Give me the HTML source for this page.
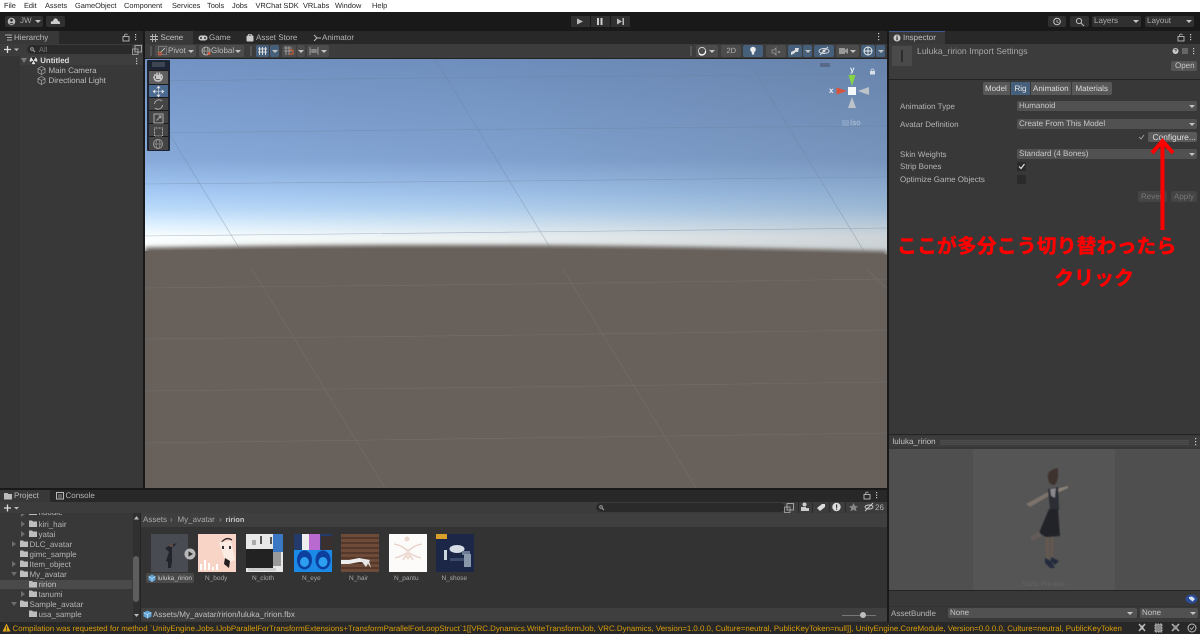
<!DOCTYPE html>
<html><head><meta charset="utf-8">
<style>
html,body{margin:0;padding:0;background:#383838;}
#p{position:relative;width:1200px;height:634px;overflow:hidden;background:#383838;font-family:"Liberation Sans",sans-serif;font-size:8px;color:#c4c4c4;text-rendering:geometricPrecision;filter:blur(.25px);}
#p div,#p span{position:absolute;white-space:nowrap;}
.t{line-height:10px;height:10px;}
.m{color:#222;top:0;line-height:11px;font-size:7.400px;}
.btn{background:#585858;border-radius:2px;}
.blu{background:#46607c;border-radius:2px;}
.dd{background:#515151;border-radius:2px;height:10px;line-height:10px;color:#c8c8c8;padding-left:2px;box-sizing:border-box;}
.tri{width:0;height:0;border-left:3px solid transparent;border-right:3px solid transparent;border-top:3px solid #c4c4c4;}
svg{position:absolute;overflow:visible;}
.tb{background:#454545;border-top:1px solid #1b1b1b;width:19px;height:13px;left:149px;}
.lb{color:#a8a8a8;font-size:6.500px;top:573.500px;}
</style></head><body><div id="p">

<!-- menu -->
<div style="left:0;top:0;width:1200px;height:11.500px;background:#fff"></div>
<span class="m" style="left:4px">File</span>
<span class="m" style="left:24px">Edit</span>
<span class="m" style="left:45px">Assets</span>
<span class="m" style="left:75px">GameObject</span>
<span class="m" style="left:124px">Component</span>
<span class="m" style="left:172px">Services</span>
<span class="m" style="left:207px">Tools</span>
<span class="m" style="left:232px">Jobs</span>
<span class="m" style="left:255.500px">VRChat SDK</span>
<span class="m" style="left:303px">VRLabs</span>
<span class="m" style="left:335px">Window</span>
<span class="m" style="left:372px">Help</span>

<!-- toolbar -->
<div style="left:0;top:11.500px;width:1200px;height:19.500px;background:#191919"></div>
<div class="btn" style="left:5px;top:16px;width:38px;height:11px;background:#303030"></div>
<svg style="left:7px;top:17px" width="10" height="9"><circle cx="4.500" cy="4.500" r="3.800" fill="#bbb"/><circle cx="4.500" cy="3.300" r="1.400" fill="#383838"/><path d="M2 7.200Q4.500 4.800 7 7.200" fill="#383838"/></svg>
<span class="t" style="left:20px;top:16px;color:#aaa">JW</span>
<div class="tri" style="left:35px;top:20px"></div>
<div class="btn" style="left:46px;top:16px;width:19px;height:11px;background:#303030"></div>
<svg style="left:50px;top:17px" width="11" height="8"><path d="M1 7Q0 4 3 4Q4 1 6 1.500Q8 2 8 4Q10.500 4 10 7Z" fill="#ccc"/></svg>

<div style="left:570.500px;top:15.500px;width:19px;height:11px;background:#303030"></div>
<div style="left:590.500px;top:15.500px;width:19px;height:11px;background:#303030"></div>
<div style="left:610.500px;top:15.500px;width:19px;height:11px;background:#303030"></div>
<svg style="left:570px;top:15px" width="60" height="12"><path d="M7 3.500L13 6.500L7 9.500Z" fill="#bbb"/><rect x="27" y="3" width="2" height="7" fill="#ccc"/><rect x="30.500" y="3" width="2" height="7" fill="#ccc"/><path d="M47 3.500L52 6.500L47 9.500Z" fill="#bbb"/><rect x="52.500" y="3" width="1.500" height="7" fill="#bbb"/></svg>

<div style="left:1048px;top:16px;width:18px;height:11px;background:#303030;border-radius:2px"></div>
<svg style="left:1052px;top:17px" width="10" height="9"><circle cx="5" cy="4.500" r="3.300" fill="none" stroke="#ccc" stroke-width="1"/><path d="M5 3V5L6.500 5.500" stroke="#ccc" stroke-width=".8" fill="none"/></svg>
<div style="left:1070px;top:16px;width:19px;height:11px;background:#303030;border-radius:2px"></div>
<svg style="left:1075px;top:17px" width="10" height="10"><circle cx="4" cy="4" r="2.600" fill="none" stroke="#bbb"/><path d="M6 6L9 9" stroke="#bbb"/></svg>
<div style="left:1092px;top:16px;width:49px;height:11px;background:#303030;border-radius:2px"></div>
<span class="t" style="left:1094px;top:16px;color:#aaa">Layers</span>
<div class="tri" style="left:1133px;top:20px"></div>
<div style="left:1145px;top:16px;width:49px;height:11px;background:#303030;border-radius:2px"></div>
<span class="t" style="left:1147px;top:16px;color:#aaa">Layout</span>
<div class="tri" style="left:1186px;top:20px"></div>

<!-- dividers -->
<div style="left:0;top:31px;width:1200px;height:603px;background:#191919"></div>

<!-- hierarchy -->
<div style="left:0;top:31px;width:143px;height:457px;background:#383838"></div>
<div style="left:0;top:31px;width:143px;height:13px;background:#282828"></div>
<div style="left:0;top:31px;width:59px;height:13px;background:#383838"></div>
<svg style="left:5px;top:34px" width="8" height="8"><path d="M0 1H7M2 3.500H7M2 6H7" stroke="#aaa" stroke-width=".9"/></svg>
<span class="t" style="left:14px;top:32.500px;color:#bbb">Hierarchy</span>
<svg style="left:122px;top:33px" width="16" height="9"><rect x="1" y="3.500" width="6" height="4.500" fill="none" stroke="#bbb" stroke-width=".9"/><path d="M2.500 3.500V2Q4 0 5.500 2" fill="none" stroke="#bbb" stroke-width=".8"/><rect x="13" y="1" width="1.200" height="1.200" fill="#ccc"/><rect x="13" y="3.500" width="1.200" height="1.200" fill="#ccc"/><rect x="13" y="6" width="1.200" height="1.200" fill="#ccc"/></svg>
<div style="left:0;top:44px;width:143px;height:12px;background:#3c3c3c"></div>
<svg style="left:4px;top:45px" width="16" height="9"><path d="M0 4.500H7M3.500 1V8" stroke="#ddd" stroke-width="1.300"/><path d="M10 3.500H15L12.500 6Z" fill="#bbb"/></svg>
<div style="left:27px;top:45px;width:105px;height:9px;background:#2a2a2a;border-radius:5px 0 0 5px"></div>
<span class="t" style="left:39px;top:44.500px;color:#7a7a7a;font-size:7.500px">All</span>
<svg style="left:30px;top:47px" width="6" height="6"><circle cx="2" cy="2" r="1.300" fill="none" stroke="#aaa" stroke-width=".8"/><path d="M3 3L5 5" stroke="#aaa"/></svg>
<svg style="left:132px;top:44.500px" width="10" height="10"><rect x=".5" y="4" width="5.500" height="5.500" fill="none" stroke="#aaa" stroke-width=".8"/><rect x="3" y=".5" width="6.500" height="6.500" fill="none" stroke="#bbb" stroke-width=".8"/></svg>
<div style="left:0;top:56px;width:20px;height:432px;background:#353535"></div>
<div style="left:20px;top:56px;width:123px;height:9px;background:#3e3e3e"></div>
<svg style="left:21px;top:58px" width="6" height="5"><path d="M0 0H6L3 5Z" fill="#7a7a7a"/></svg>
<svg style="left:29px;top:56px" width="9" height="9"><circle cx="4.500" cy="4.500" r="3.800" fill="#ddd"/><path d="M4.500 4.500L2.500 1.500A3.800 3.800 0 0 1 6.500 1.500ZM4.500 4.500L1 6L2.500 8ZM4.500 4.500L8 6L6.500 8Z" fill="#222"/></svg>
<span class="t" style="left:40.300px;top:55.500px;color:#dcdcdc;font-weight:bold;font-size:7.800px">Untitled</span>
<svg style="left:136px;top:58px" width="2" height="7"><rect width="1.200" height="1.200" fill="#ccc"/><rect y="2.500" width="1.200" height="1.200" fill="#ccc"/><rect y="5" width="1.200" height="1.200" fill="#ccc"/></svg>
<svg style="left:37px;top:66px" width="9" height="9"><path d="M4.500 .5L8 2.500V6.500L4.500 8.500L1 6.500V2.500ZM1 2.500L4.500 4.500L8 2.500M4.500 4.500V8.500" fill="none" stroke="#aaa" stroke-width=".7"/></svg>
<svg style="left:37px;top:76px" width="9" height="9"><path d="M4.500 .5L8 2.500V6.500L4.500 8.500L1 6.500V2.500ZM1 2.500L4.500 4.500L8 2.500M4.500 4.500V8.500" fill="none" stroke="#aaa" stroke-width=".7"/></svg>
<span class="t" style="left:48.500px;top:65.500px;color:#bdbdbd">Main Camera</span>
<span class="t" style="left:48.500px;top:75.500px;color:#bdbdbd">Directional Light</span>

<!-- scene tabs -->
<div style="left:145px;top:31px;width:742px;height:13px;background:#282828"></div>
<div style="left:145px;top:31px;width:48px;height:13px;background:#383838"></div>
<svg style="left:150px;top:34px" width="8" height="8"><path d="M2.500 0V8M5.500 0V8M0 2.500H8M0 5.500H8" stroke="#bbb" stroke-width=".9"/></svg>
<span class="t" style="left:160.500px;top:32.500px;color:#c4c4c4">Scene</span>
<svg style="left:198px;top:35px" width="10" height="6"><rect x=".5" y=".5" width="9" height="5" rx="2.500" fill="#ccc"/><circle cx="3" cy="3" r="1" fill="#333"/><circle cx="7" cy="3" r="1" fill="#333"/></svg>
<span class="t" style="left:209px;top:32.500px;color:#b4b4b4">Game</span>
<svg style="left:246px;top:33px" width="8" height="9"><rect x=".5" y="2.500" width="7" height="6" rx="1" fill="#ccc"/><path d="M2.500 2.500V1.500H5.500V2.500" stroke="#ccc" fill="none" stroke-width=".8"/></svg>
<span class="t" style="left:256px;top:32.500px;color:#b4b4b4">Asset Store</span>
<svg style="left:313px;top:34px" width="9" height="8"><path d="M1 1L4 4L1 7M4 4H8" fill="none" stroke="#bbb" stroke-width="1"/></svg>
<span class="t" style="left:322px;top:32.500px;color:#b4b4b4">Animator</span>
<svg style="left:878px;top:33px" width="2" height="8"><rect width="1.200" height="1.200" fill="#ccc"/><rect y="3" width="1.200" height="1.200" fill="#ccc"/><rect y="6" width="1.200" height="1.200" fill="#ccc"/></svg>

<!-- scene toolbar -->
<div style="left:145px;top:44px;width:742px;height:15px;background:#3c3c3c"></div>
<div style="left:145px;top:58px;width:742px;height:1px;background:#222"></div>
<div style="left:150px;top:46px;width:1.500px;height:10px;background:#555"></div>
<div class="btn" style="left:155px;top:45px;width:41px;height:12px;background:#4c4c4c"></div>
<svg style="left:158px;top:46px" width="10" height="10"><rect x=".5" y=".5" width="8" height="8" fill="none" stroke="#888" stroke-width=".7"/><path d="M2 7L7 2" stroke="#ddd" stroke-width=".7"/><circle cx="2" cy="7.500" r="1.500" fill="none" stroke="#d65c36"/></svg>
<span class="t" style="left:168px;top:46px;color:#bbb">Pivot</span>
<div class="tri" style="left:188px;top:50px"></div>
<div class="btn" style="left:199px;top:45px;width:45px;height:12px;background:#4c4c4c"></div>
<svg style="left:201px;top:46px" width="10" height="10"><circle cx="5" cy="5" r="4" fill="none" stroke="#bbb" stroke-width=".8"/><ellipse cx="5" cy="5" rx="2" ry="4" fill="none" stroke="#bbb" stroke-width=".6"/><path d="M1 5H9" stroke="#bbb" stroke-width=".6"/><circle cx="8" cy="7.500" r="1.500" fill="#d65c36"/></svg>
<span class="t" style="left:211px;top:46px;color:#bbb">Global</span>
<div class="tri" style="left:235px;top:50px"></div>
<div style="left:250px;top:46px;width:1.500px;height:10px;background:#555"></div>
<div class="blu" style="left:256px;top:45px;width:13px;height:12px"></div>
<div class="blu" style="left:270px;top:45px;width:9px;height:12px"></div>
<svg style="left:258px;top:47px" width="9" height="8"><path d="M1.500 0V8M4.500 0V8M7.500 0V8M0 2H9M0 5H9" stroke="#ddd" stroke-width="1"/></svg>
<div class="tri" style="left:272px;top:50px"></div>
<div class="btn" style="left:282px;top:45px;width:14px;height:12px;background:#4c4c4c"></div>
<div class="btn" style="left:297px;top:45px;width:8px;height:12px;background:#4c4c4c"></div>
<svg style="left:284px;top:46px" width="10" height="10"><path d="M2 0V9M5 0V9M0 2H8M0 5H8" stroke="#aaa" stroke-width=".8"/><path d="M5 4H9V8H5" fill="none" stroke="#d65c36" stroke-width="1"/></svg>
<div class="tri" style="left:298px;top:50px"></div>
<div class="btn" style="left:307px;top:45px;width:22px;height:12px;background:#4c4c4c"></div>
<svg style="left:309px;top:47px" width="10" height="8"><path d="M1 0V8M9 0V8M1 3H9M1 5H9M4 2V6M6 2V6" stroke="#999" stroke-width=".9"/></svg>
<div class="tri" style="left:321px;top:50px"></div>

<div style="left:690px;top:46px;width:1.500px;height:10px;background:#555"></div>
<div class="btn" style="left:696px;top:45px;width:22px;height:12px;background:#4c4c4c"></div>
<svg style="left:697px;top:46px" width="10" height="10"><circle cx="5" cy="5" r="3.600" fill="none" stroke="#ccc"/><path d="M2 7.500A3.600 3.600 0 0 0 8.500 5" stroke="#fff" fill="none" stroke-width="1.200"/></svg>
<div class="tri" style="left:709px;top:50px"></div>
<div class="btn" style="left:721px;top:45px;width:20px;height:12px;background:#4c4c4c"></div>
<span class="t" style="left:726.500px;top:46px;color:#b4b4b4;font-size:7.500px">2D</span>
<div class="blu" style="left:743px;top:45px;width:20px;height:12px"></div>
<svg style="left:749px;top:46px" width="8" height="10"><circle cx="4" cy="3.500" r="2.800" fill="#eee"/><rect x="2.800" y="6" width="2.400" height="2.500" fill="#eee"/></svg>
<div class="btn" style="left:766px;top:45px;width:20px;height:12px;background:#4c4c4c"></div>
<svg style="left:772px;top:47px" width="9" height="8"><path d="M0 3V6H2L4 8V1L2 3ZM6 4L8 6M8 4L6 6" fill="none" stroke="#999" stroke-width=".8"/></svg>
<div class="blu" style="left:788px;top:45px;width:14px;height:12px"></div>
<div class="blu" style="left:803px;top:45px;width:9px;height:12px"></div>
<svg style="left:790px;top:47px" width="10" height="8"><path d="M1 5L5 3L5 6L1 8ZM5 1H9L8 5H5Z" fill="#ddd"/></svg>
<div class="tri" style="left:805px;top:50px"></div>
<div class="blu" style="left:814px;top:45px;width:20px;height:12px"></div>
<svg style="left:818px;top:46px" width="12" height="10"><ellipse cx="6" cy="5" rx="5" ry="2.500" fill="none" stroke="#ddd" stroke-width=".9"/><circle cx="6" cy="5" r="1.500" fill="#ddd"/><path d="M2 9L10 1" stroke="#ddd" stroke-width="1"/></svg>
<div class="btn" style="left:836px;top:45px;width:23px;height:12px;background:#4c4c4c"></div>
<svg style="left:839px;top:47px" width="9" height="8"><rect y="1" width="6" height="6" fill="#999"/><path d="M6 3L9 1V7L6 5Z" fill="#999"/></svg>
<div class="tri" style="left:850px;top:50px"></div>
<div class="blu" style="left:861px;top:45px;width:14px;height:12px"></div>
<div class="blu" style="left:876px;top:45px;width:9px;height:12px"></div>
<svg style="left:863px;top:46px" width="10" height="10"><circle cx="5" cy="5" r="4" fill="none" stroke="#eee" stroke-width="1"/><path d="M1 5H9M5 1V9" stroke="#eee" stroke-width=".9"/></svg>
<div class="tri" style="left:878px;top:50px"></div>

<!-- scene view -->
<svg style="left:145px;top:59px;overflow:hidden" width="742" height="429">
<defs>
<linearGradient id="s" x1="0" y1="0" x2="0" y2="1">
<stop offset="0" stop-color="#7293c4"/>
<stop offset=".5" stop-color="#86a9da"/>
<stop offset=".67" stop-color="#a6cbf5"/>
<stop offset=".755" stop-color="#bcdcfb"/>
<stop offset=".83" stop-color="#dff1ff"/>
<stop offset=".89" stop-color="#fbffff"/>
<stop offset="1" stop-color="#f4f8f6"/>
</linearGradient>
<linearGradient id="o" x1="0" y1="0" x2="1" y2="0">
<stop offset="0" stop-color="#4a5866" stop-opacity="0"/>
<stop offset=".45" stop-color="#4a5866" stop-opacity=".09"/>
<stop offset="1" stop-color="#4a5866" stop-opacity=".26"/>
</linearGradient>
<filter id="b" x="-5%" y="-5%" width="110%" height="110%"><feGaussianBlur stdDeviation="2"/></filter>
</defs>
<rect width="742" height="200" fill="url(#s)"/>
<rect width="742" height="200" fill="url(#o)"/>
<g stroke="#6c7f98" stroke-width=".6" opacity=".5" fill="none">
<path d="M0 22L375 18L742 15M0 74L375 70L742 67M0 125L375 122L742 118M0 177L380 173L742 169"/>
<path d="M0 35L110 215M290 0L420 213M602 0L742 230"/>
</g>
<path d="M0 188.500Q371 182 742 192V429H0Z" fill="#67605b" filter="url(#b)"/>
<path d="M0 192Q371 185.500 742 195.500V429H0Z" fill="#67605b"/>
<g stroke="#73706c" stroke-width=".6" fill="none">
<path d="M0 229L380 225L742 220M0 280L380 276L742 271M0 332L380 328L742 323M0 384L380 379L742 374"/>
<path d="M107 210L240 429M418 210L551 429M722 210L742 230"/>
</g>
</svg>
<!-- tool palette -->
<div style="left:147px;top:60px;width:23px;height:91px;background:#1d2433;border-radius:1px"></div>
<div style="left:152px;top:62px;width:13px;height:5px;background:#3d4452"></div>
<div class="tb" style="top:70px;background:#5e5e5e"></div>
<div class="tb" style="top:84px;background:#4b6a91"></div>
<div class="tb" style="top:97px"></div>
<div class="tb" style="top:110px"></div>
<div class="tb" style="top:123px"></div>
<div class="tb" style="top:136px"></div>
<svg style="left:149px;top:70px" width="19" height="80" fill="none" stroke="#c8c8c8" stroke-width="1">
<path d="M6 6V4M8 5V2.500M10.500 5V2.500M12.500 6V4M5 6Q5 11 9 11Q13 11 13.500 6" stroke-width="1.500"/><path d="M7 5H12V9H7Z" fill="#c8c8c8" stroke="none"/>
<path d="M9.500 17V26M5 21.500H14M9.500 16L8 18H11ZM9.500 27L8 25H11ZM4 21.500L6 20V23ZM15 21.500L13 20V23Z" fill="#ddd" stroke="#ddd" stroke-width=".6"/>
<path d="M5.500 34A4.500 4.500 0 0 1 13 31M13.500 35A4.500 4.500 0 0 1 6 38" stroke="#aaa"/>
<rect x="5" y="44" width="9" height="9" stroke="#aaa"/><path d="M7.500 50.500L12 46M9.500 46H12V48.500" stroke="#aaa"/>
<rect x="5.500" y="58" width="8" height="8" stroke="#aaa" stroke-dasharray="1 .5"/>
<circle cx="9" cy="74" r="4.500" stroke="#999"/><ellipse cx="9" cy="74" rx="2" ry="4.500" stroke="#999" stroke-width=".7"/><path d="M4.500 74H13.500" stroke="#999" stroke-width=".7"/>
</svg>

<!-- gizmo -->
<div style="left:820px;top:63px;width:10px;height:4px;background:#58698a"></div>
<svg style="left:869px;top:68px" width="7" height="7"><rect x="1" y="3" width="5" height="3.500" fill="#d8e0ec"/><path d="M2 3V2Q3.500 0 5 2V3" stroke="#d8e0ec" fill="none" stroke-width=".7"/></svg>
<span class="t" style="left:850px;top:65px;color:#e9eff5;font-weight:bold;font-size:8px">y</span>
<span class="t" style="left:829px;top:86px;color:#e9eff5;font-weight:bold;font-size:8px">x</span>
<svg style="left:830px;top:70px" width="42" height="42">
<path d="M18.500 5H25.500L22 16Z" fill="#85d445"/>
<path d="M6.500 17.500V24.500L17 21Z" fill="#d9543b"/>
<path d="M39 17V25L28 21Z" fill="#bcc3c9"/>
<path d="M18 38H26L22 27Z" fill="#bcc3c9"/>
<rect x="18" y="17" width="8" height="8" fill="#f4f8fb"/>
</svg>
<svg style="left:842px;top:120px" width="8" height="7"><path d="M0 1H7M0 3H7M0 5H7" stroke="#a8bcd6" stroke-width=".8"/></svg>
<span class="t" style="left:850px;top:118px;color:#b7c6da;font-size:8px">Iso</span>

<!-- inspector -->
<div style="left:889px;top:31px;width:311px;height:591px;background:#383838"></div>
<div style="left:889px;top:31px;width:311px;height:13px;background:#282828"></div>
<div style="left:889px;top:31px;width:56px;height:13px;background:#383838;border-top:1px solid #3c5a8c;box-sizing:border-box"></div>
<svg style="left:893px;top:34px" width="8" height="8"><circle cx="4" cy="4" r="3.500" fill="#ccc"/><rect x="3.400" y="3.200" width="1.300" height="3" fill="#333"/><rect x="3.400" y="1.600" width="1.300" height="1.100" fill="#333"/></svg>
<span class="t" style="left:903px;top:32.500px;color:#c0c0c0">Inspector</span>
<svg style="left:1177px;top:33px" width="16" height="9"><rect x="1" y="3.500" width="6" height="4.500" fill="none" stroke="#bbb" stroke-width=".9"/><path d="M2.500 3.500V2Q4 0 5.500 2" fill="none" stroke="#bbb" stroke-width=".8"/><rect x="13" y="1" width="1.200" height="1.200" fill="#ccc"/><rect x="13" y="3.500" width="1.200" height="1.200" fill="#ccc"/><rect x="13" y="6" width="1.200" height="1.200" fill="#ccc"/></svg>
<div style="left:889px;top:44px;width:311px;height:35px;background:#3c3c3c"></div>
<div style="left:889px;top:79px;width:311px;height:1px;background:#242424"></div>
<div style="left:892px;top:46px;width:20px;height:20px;background:#4a4a4a"></div>
<div style="left:901px;top:50px;width:2px;height:12px;background:#2b2b2b"></div>
<span class="t" style="left:917px;top:46px;color:#a8a8a8;font-size:8.700px">Luluka_ririon Import Settings</span>
<svg style="left:1172px;top:47px" width="24" height="8"><circle cx="3.500" cy="4" r="3" fill="#ccc"/><path d="M2.500 3Q3.500 1.500 4.500 3L3.500 4.500" stroke="#333" fill="none" stroke-width=".7"/><path d="M10 2H16M10 4H16M10 6H16" stroke="#aaa" stroke-width=".8"/><rect x="21" y="1" width="1.200" height="1.200" fill="#ccc"/><rect x="21" y="3.500" width="1.200" height="1.200" fill="#ccc"/><rect x="21" y="6" width="1.200" height="1.200" fill="#ccc"/></svg>
<div class="btn" style="left:1171px;top:60.500px;width:26px;height:10.500px;background:#565656"></div>
<span class="t" style="left:1175px;top:60.500px;color:#c8c8c8">Open</span>

<div style="left:983px;top:82px;width:27px;height:13px;background:#585858;border-radius:2px 0 0 2px"></div>
<div style="left:1011px;top:82px;width:19px;height:13px;background:#46607c"></div>
<div style="left:1031px;top:82px;width:40px;height:13px;background:#585858"></div>
<div style="left:1072px;top:82px;width:40px;height:13px;background:#585858;border-radius:0 2px 2px 0"></div>
<span class="t" style="left:985px;top:83.500px;color:#ddd">Model</span>
<span class="t" style="left:1014.500px;top:83.500px;color:#e6e6e6">Rig</span>
<span class="t" style="left:1033px;top:83.500px;color:#ddd">Animation</span>
<span class="t" style="left:1075.500px;top:83.500px;color:#ddd">Materials</span>

<span class="t" style="left:900px;top:102px;color:#b4b4b4">Animation Type</span>
<span class="t" style="left:900px;top:119.500px;color:#b4b4b4">Avatar Definition</span>
<span class="t" style="left:900px;top:149.500px;color:#b4b4b4">Skin Weights</span>
<span class="t" style="left:900px;top:162px;color:#b4b4b4">Strip Bones</span>
<span class="t" style="left:900px;top:174.500px;color:#b4b4b4">Optimize Game Objects</span>
<div class="dd" style="left:1017px;top:101px;width:180px">Humanoid</div>
<div class="tri" style="left:1189px;top:105px"></div>
<div class="dd" style="left:1017px;top:119px;width:180px">Create From This Model</div>
<div class="tri" style="left:1189px;top:123px"></div>
<svg style="left:1138px;top:134px" width="7" height="6"><path d="M1 3L3 5L6 1" stroke="#aaa" fill="none" stroke-width=".8"/></svg>
<div class="btn" style="left:1148px;top:132px;width:49px;height:10px;background:#5a5a5a"></div>
<span class="t" style="left:1152.500px;top:132px;color:#ddd;font-size:8.400px">Configure...</span>
<div class="dd" style="left:1017px;top:149px;width:180px">Standard (4 Bones)</div>
<div class="tri" style="left:1189px;top:153px"></div>
<div style="left:1017px;top:162px;width:9px;height:9px;background:#2a2a2a;border-radius:1px"></div>
<svg style="left:1017px;top:162px" width="9" height="9"><path d="M2 4.500L4 6.500L7.500 2" stroke="#e4e4e4" stroke-width="1.200" fill="none"/></svg>
<div style="left:1017px;top:175px;width:9px;height:9px;background:#2a2a2a;border-radius:1px"></div>
<div class="btn" style="left:1138px;top:191px;width:29px;height:11px;background:#444"></div>
<div class="btn" style="left:1171px;top:191px;width:26px;height:11px;background:#444"></div>
<span class="t" style="left:1141px;top:192px;color:#777">Revert</span>
<span class="t" style="left:1174px;top:192px;color:#777">Apply</span>

<!-- annotation -->
<svg style="left:1140px;top:130px" width="40" height="105">
<path d="M22.500 11V100" stroke="#f00" stroke-width="4"/>
<path d="M12 23L22.500 11L33 23" stroke="#f00" stroke-width="4" fill="none"/>
</svg>
<span style="left:897px;top:234px;font-family:'Liberation Sans','Noto Sans CJK JP',sans-serif;font-weight:900;font-size:20px;line-height:26px;color:#f00;letter-spacing:-.050px">ここが多分こう切り替わったら</span>
<span style="left:1054px;top:266px;font-family:'Liberation Sans','Noto Sans CJK JP',sans-serif;font-weight:900;font-size:20px;line-height:26px;color:#f00">クリック</span>

<!-- preview -->
<div style="left:889px;top:434px;width:311px;height:1px;background:#242424"></div>
<div style="left:889px;top:436px;width:311px;height:11px;background:#3c3c3c"></div>
<span class="t" style="left:892.500px;top:437px;color:#c4c4c4">luluka_ririon</span>
<div style="left:940px;top:440px;width:249px;height:5px;background:repeating-linear-gradient(to bottom,#4b4b4b 0 1px,#444 1px 2px)"></div>
<svg style="left:1195px;top:438px" width="2" height="8"><rect width="1.200" height="1.200" fill="#ccc"/><rect y="3" width="1.200" height="1.200" fill="#ccc"/><rect y="6" width="1.200" height="1.200" fill="#ccc"/></svg>
<div style="left:889px;top:449px;width:311px;height:141px;background:#4f4f4f"></div>
<div style="left:973px;top:449px;width:142px;height:141px;background:#555"></div>
<span class="t" style="left:1022px;top:580px;color:#646464;font-size:6.800px">Static Preview</span>
<svg style="left:1020px;top:465px;filter:blur(.5px)" width="70" height="105">
<path d="M6 39L30 26L34 28L10 42Z" fill="#7d736c"/>
<path d="M36 24L48 21L48 23L37 28Z" fill="#8d8279"/>
<path d="M30 6L34 4L38 3L38 11Q37 20 33 20Q29 19 28 14Q27 9 30 6Z" fill="#3e322f"/>
<path d="M28 24L38 22L39 45L30 45Z" fill="#2c2e36"/>
<path d="M30 24L36 23L35 33L31 31Z" fill="#8a898c"/>
<path d="M29 44L38 44L40 71L26 72L19 68Z" fill="#212329"/>
<path d="M19 66L10 72L12 76L22 71Z" fill="#635b57"/>
<path d="M25 72L29 72L29 93L26 93ZM31 72L34 72L33 93L30 93Z" fill="#655850"/>
<path d="M25 93L31 96L35 103L30 103L25 98ZM31 92L39 96L35 100L31 96Z" fill="#252b3e"/>
</svg>
<div style="left:889px;top:590px;width:311px;height:1px;background:#242424"></div>
<svg style="left:1185px;top:594px" width="13" height="10"><ellipse cx="6.500" cy="5" rx="6" ry="4.500" fill="#2a4d95"/><path d="M4 3L7 2.500L10 5L7.500 7.500L4 4.500Z" fill="#dbe4f5"/></svg>
<div style="left:889px;top:606px;width:311px;height:1px;background:#333"></div>
<span class="t" style="left:891px;top:609px;color:#b4b4b4">AssetBundle</span>
<div class="dd" style="left:948px;top:608px;width:189px">None</div>
<div class="tri" style="left:1127px;top:612px"></div>
<div class="dd" style="left:1140px;top:608px;width:58px">None</div>
<div class="tri" style="left:1190px;top:612px"></div>

<!-- project -->
<div style="left:0;top:490px;width:887px;height:132px;background:#383838"></div>
<div style="left:0;top:490px;width:887px;height:12px;background:#282828"></div>
<div style="left:0;top:490px;width:50px;height:12px;background:#383838"></div>
<svg style="left:4px;top:492px" width="9" height="8"><path d="M0 1H3.500L4.500 2H8V7.500H0Z" fill="#bbb"/></svg>
<span class="t" style="left:14px;top:491px;color:#bbb">Project</span>
<svg style="left:56px;top:492px" width="8" height="8"><rect x=".5" y=".5" width="7" height="6.500" fill="none" stroke="#bbb"/><path d="M2 3H6M2 5H6" stroke="#bbb" stroke-width=".7"/></svg>
<span class="t" style="left:65.500px;top:491px;color:#b4b4b4">Console</span>
<svg style="left:863px;top:491px" width="16" height="9"><rect x="1" y="3.500" width="6" height="4.500" fill="none" stroke="#bbb" stroke-width=".9"/><path d="M2.500 3.500V2Q4 0 5.500 2" fill="none" stroke="#bbb" stroke-width=".8"/><rect x="13" y="1" width="1.200" height="1.200" fill="#ccc"/><rect x="13" y="3.500" width="1.200" height="1.200" fill="#ccc"/><rect x="13" y="6" width="1.200" height="1.200" fill="#ccc"/></svg>
<div style="left:0;top:502px;width:887px;height:11px;background:#3c3c3c"></div>
<svg style="left:4px;top:502.500px" width="16" height="10"><path d="M0 5H7M3.500 1.500V8.500" stroke="#ddd" stroke-width="1.300"/><path d="M10 4H15L12.500 6.500Z" fill="#bbb"/></svg>
<div style="left:596px;top:503px;width:189px;height:9px;background:#2a2a2a;border-radius:5px"></div>
<svg style="left:599px;top:505px" width="6" height="6"><circle cx="2" cy="2" r="1.300" fill="none" stroke="#aaa" stroke-width=".8"/><path d="M3 3L5 5" stroke="#aaa"/></svg>
<svg style="left:784px;top:502.500px" width="10" height="10"><rect x=".5" y="4" width="5.500" height="5.500" fill="none" stroke="#aaa" stroke-width=".8"/><rect x="3" y=".5" width="6.500" height="6.500" fill="none" stroke="#bbb" stroke-width=".8"/></svg>
<div style="left:798px;top:501px;width:1px;height:12px;background:#2a2a2a"></div>
<div style="left:812px;top:501px;width:1px;height:12px;background:#2a2a2a"></div>
<div style="left:829px;top:501px;width:1px;height:12px;background:#2a2a2a"></div>
<div style="left:845px;top:501px;width:1px;height:12px;background:#2a2a2a"></div>
<svg style="left:800px;top:502px" width="75" height="10"><circle cx="4.500" cy="2.500" r="2" fill="#ccc"/><path d="M1 5H6V9H1ZM6 6L9 6V9L6 9Z" fill="#ccc"/><path d="M17 6L22 2H25V5L20 9Z" fill="#ddd"/><circle cx="36.500" cy="5" r="4.200" fill="#ddd"/><rect x="36" y="2.500" width="1.200" height="3.300" fill="#333"/><rect x="36" y="6.500" width="1.200" height="1.200" fill="#333"/><path d="M53.500 1L55 4L58 4.300L55.800 6.300L56.500 9.300L53.500 7.700L50.500 9.300L51.200 6.300L49 4.300L52 4Z" fill="#888"/><ellipse cx="69" cy="5" rx="4" ry="2" fill="none" stroke="#ccc" stroke-width=".9"/><path d="M65 9L73 1" stroke="#ccc"/></svg>
<span class="t" style="left:875px;top:502.500px;color:#b4b4b4">26</span>

<div style="left:0;top:513px;width:133px;height:109px;background:#383838"></div>
<svg style="left:0;top:514px;overflow:hidden" width="130" height="107">
<g fill="#bdbdbd">
<path d="M29 -1H37V1H29ZM29 6.500H32L33 7.500H37V13H29ZM29 16.500H32L33 17.500H37V23H29ZM20 26.500H23L24 27.500H28V33H20ZM20 36.500H23L24 37.500H28V43H20ZM20 46.500H23L24 47.500H28V53H20ZM20 56.500H23L24 57.500H28V63H20ZM29 66.500H32L33 67.500H37V73H29ZM29 76.500H32L33 77.500H37V83H29ZM20 86.500H23L24 87.500H28V93H20ZM29 96.500H32L33 97.500H37V103H29Z"/>
</g>
<g fill="#6d6d6d"><path d="M21 -3L25 0L21 3ZM21 7L25 10L21 13ZM21 17L25 20L21 23ZM12 27L16 30L12 33ZM12 47L16 50L12 53ZM21 77L25 80L21 83Z"/><path d="M11 58H17L14 62ZM11 88H17L14 92Z"/></g>
</svg>
<div style="left:0;top:579.500px;width:132px;height:9.500px;background:#4a4a4a"></div>
<svg style="left:29px;top:580.500px" width="8" height="7"><path d="M0 0H3L4 1H8V6.500H0Z" fill="#bdbdbd"/></svg>
<div style="left:30px;top:513px;width:100px;height:5px;overflow:hidden"><span class="t" style="left:8.500px;top:-5px;color:#b4b4b4">noodle</span></div>
<span class="t" style="left:38.500px;top:519.500px;color:#b4b4b4">kiri_hair</span>
<span class="t" style="left:38.500px;top:529.500px;color:#b4b4b4">yatai</span>
<span class="t" style="left:29.500px;top:539.500px;color:#b4b4b4">DLC_avatar</span>
<span class="t" style="left:29.500px;top:549.500px;color:#b4b4b4">gimc_sample</span>
<span class="t" style="left:29.500px;top:559.500px;color:#b4b4b4">Item_object</span>
<span class="t" style="left:29.500px;top:569.500px;color:#b4b4b4">My_avatar</span>
<span class="t" style="left:38.500px;top:579.500px;color:#c4c4c4">ririon</span>
<span class="t" style="left:38.500px;top:589.500px;color:#b4b4b4">tanumi</span>
<span class="t" style="left:29.500px;top:599.500px;color:#b4b4b4">Sample_avatar</span>
<span class="t" style="left:38.500px;top:609.500px;color:#b4b4b4">usa_sample</span>
<div style="left:133px;top:513px;width:7px;height:109px;background:#303030"></div>
<div style="left:133px;top:556px;width:6px;height:46px;background:#5e5e5e;border-radius:3px"></div>
<svg style="left:134px;top:516px" width="5" height="102"><path d="M0 3.500L2.500 0L5 3.500Z" fill="#bbb"/><path d="M0 98L5 98L2.500 101Z" fill="#bbb"/></svg>
<div style="left:140px;top:513px;width:1px;height:109px;background:#242424"></div>

<div style="left:141px;top:513px;width:746px;height:14px;background:#3f3f3f"></div>
<span class="t" style="left:143px;top:515px;color:#aaa">Assets</span>
<span class="t" style="left:170px;top:515px;color:#999">&#8250;</span>
<span class="t" style="left:177.500px;top:515px;color:#aaa">My_avatar</span>
<span class="t" style="left:219px;top:515px;color:#999">&#8250;</span>
<span class="t" style="left:225.500px;top:515px;color:#c8c8c8;font-weight:bold;font-size:7.400px">ririon</span>
<div style="left:141px;top:527px;width:746px;height:81px;background:#333"></div>

<!-- thumbs -->
<div style="left:151px;top:534px;width:37px;height:38px;background:#484b52"></div>
<svg style="left:151px;top:534px" width="37" height="38"><path d="M14 14L20 11L26 9L21 14L21 28L20 34L17 34L17 28L15 27L18 18Z" fill="#22242c"/><path d="M18 10L22 9L22 13L19 13Z" fill="#5a4a45"/></svg>
<svg style="left:183.500px;top:547.500px" width="12" height="12"><circle cx="6" cy="6" r="5.500" fill="#b9b9b9"/><path d="M4.500 3.300L9 6L4.500 8.700Z" fill="#333"/></svg>
<div style="left:146px;top:573px;width:48px;height:10px;background:#4a4a4a;border-radius:2px"></div>
<svg style="left:148px;top:574px" width="8" height="8"><path d="M4 .5L7.500 2.500V6L4 8L.5 6V2.500Z" fill="#5fa4d6"/><path d="M4 4.500V8M4 4.500L7.500 2.500M4 4.500L.5 2.500" stroke="#dfeefa" stroke-width=".6"/></svg>
<span class="t" style="left:157.500px;top:573.500px;color:#cfcfcf;font-size:6.400px">luluka_ririon</span>

<div style="left:198px;top:534px;width:38px;height:38px;background:#f7d4c5"></div>
<svg style="left:198px;top:534px" width="38" height="38"><path d="M23 9Q28 2 34 6" stroke="#2a2220" stroke-width="1.300" fill="none"/><path d="M21 8L33 7L37 26L28 30Z" fill="#fbeee5" opacity=".9"/><path d="M27 24L32 27L31 34L26 30Z" fill="#231f20"/><rect x="24" y="12" width="2" height="3" fill="#333"/><rect x="31" y="12" width="2" height="3" fill="#333"/><path d="M2 36V30H4V36ZM6 36V26H8V36ZM10 36V29H12V36ZM14 36V33H16V36ZM18 36V30H20V36Z" fill="#fff"/></svg>
<span class="t lb" style="left:205px">N_body</span>

<div style="left:246px;top:534px;width:37px;height:38px;background:#e8e8e8"></div>
<svg style="left:246px;top:534px" width="37" height="38"><rect y="15" width="27" height="19" fill="#222"/><rect x="27" width="10" height="18" fill="#3a78c4"/><rect x="27" y="18" width="8" height="14" fill="#9a9a9a"/><rect x="14" y="2" width="2" height="8" fill="#555"/><rect x="24" y="3" width="2" height="7" fill="#555"/><rect x="6" y="6" width="4" height="5" fill="#aaa"/><rect x="2" y="34" width="28" height="3" fill="#cdcdcd"/></svg>
<span class="t lb" style="left:252px">N_cloth</span>

<div style="left:293.500px;top:534px;width:38px;height:38px;background:#1e88e8"></div>
<svg style="left:293.500px;top:534px" width="38" height="38"><rect width="38" height="16" fill="#233a6b"/><rect x="8" y="0" width="7" height="16" fill="#eee"/><rect x="15" y="0" width="11" height="16" fill="#b86ad0"/><rect x="27" y="2" width="11" height="14" fill="#3a3030"/><rect x="0" y="16" width="38" height="22" fill="#1a8ae6"/><ellipse cx="10.500" cy="26" rx="7.500" ry="9.500" fill="#0d3f9e"/><ellipse cx="29" cy="26" rx="7.500" ry="9.500" fill="#0d3f9e"/><ellipse cx="10.500" cy="28" rx="4.500" ry="5" fill="#2d9ff0"/><ellipse cx="29" cy="28" rx="4.500" ry="5" fill="#2d9ff0"/></svg>
<span class="t lb" style="left:302px">N_eye</span>

<div style="left:341px;top:534px;width:38px;height:38px;background:repeating-linear-gradient(to bottom,#6e4a38 0 3px,#54382c 3px 5px)"></div>
<svg style="left:341px;top:534px" width="38" height="38"><path d="M0 26H8L18 24L28 27L30 34L26 28L18 28L8 30H0Z" fill="#eee"/><path d="M18 24L29 26L25 33Z" fill="#e6e6e6"/></svg>
<span class="t lb" style="left:349px">N_hair</span>

<div style="left:388.500px;top:534px;width:38px;height:38px;background:#fdfbf9"></div>
<svg style="left:388.500px;top:534px" width="38" height="38"><path d="M5 10Q15 12 19 18Q23 12 33 10M6 24Q14 22 19 18Q24 22 32 24M14 26L19 18L24 26" stroke="#e6cfc6" fill="none" stroke-width="1.300"/><circle cx="18" cy="5" r="2.500" fill="#e9d8d0"/><path d="M19 14L22 22L19 26L16 22Z" fill="#efdcd3"/></svg>
<span class="t lb" style="left:394px">N_pantu</span>

<div style="left:436px;top:534px;width:38px;height:38px;background:#1c2748"></div>
<svg style="left:436px;top:534px" width="38" height="38"><rect width="11" height="5" fill="#d8a02a"/><ellipse cx="21" cy="15" rx="7.500" ry="4" fill="#d5dce3"/><rect x="26" y="17" width="8" height="4" fill="#6b7d95"/><rect x="8" y="16" width="3" height="10" fill="#ccd4dc"/><rect x="28" y="20" width="7" height="13" fill="#8a98ab"/><rect x="14" y="24" width="14" height="3" fill="#3a4a6b"/></svg>
<span class="t lb" style="left:441.500px">N_shose</span>

<!-- path bar -->
<div style="left:141px;top:608px;width:746px;height:13px;background:#3f3f3f"></div>
<svg style="left:143px;top:610px" width="9" height="9"><path d="M4.500 .5L8.500 2.500V6.500L4.500 8.500L.5 6.500V2.500Z" fill="#5fa4d6"/><path d="M4.500 4.500V8.500M4.500 4.500L8.500 2.500M4.500 4.500L.5 2.500" stroke="#dfeefa" stroke-width=".6"/></svg>
<span class="t" style="left:153px;top:609.500px;color:#c0c0c0">Assets/My_avatar/ririon/luluka_ririon.fbx</span>
<div style="left:842px;top:614.500px;width:34px;height:1px;background:#777"></div>
<div style="left:859.500px;top:612px;width:6px;height:6px;background:#bdbdbd;border-radius:3px"></div>

<!-- status -->
<div style="left:0;top:622px;width:1200px;height:12px;background:#282828"></div>
<svg style="left:2px;top:623px" width="9" height="9"><path d="M4.500 .5L8.500 8.500H.5Z" fill="#e0a81c"/><rect x="4" y="3.500" width="1" height="2.800" fill="#333"/><rect x="4" y="6.800" width="1" height="1" fill="#333"/></svg>
<span class="t" style="left:12.500px;top:623.500px;color:#d99e0a;font-size:7.900px;width:1109px;overflow:hidden;">Compilation was requested for method `UnityEngine.Jobs.IJobParallelForTransformExtensions+TransformParallelForLoopStruct`1[[VRC.Dynamics.WriteTransformJob, VRC.Dynamics, Version=1.0.0.0, Culture=neutral, PublicKeyToken=null]], UnityEngine.CoreModule, Version=0.0.0.0, Culture=neutral, PublicKeyToken=null</span>
<svg style="left:1137px;top:623px" width="60" height="10" fill="none" stroke="#bbb" stroke-width="1"><path d="M2 1L8 8M8 1L2 8" stroke-width="1.500"/><rect x="3.500" y="2.500" width="3" height="4" fill="#bbb" stroke="none"/><rect x="18" y="1" width="7" height="8" fill="#888" stroke-dasharray="1.500 1"/><path d="M35 1L42 8M42 1L35 8" stroke-width="1.500"/><rect x="36.500" y="2.500" width="4" height="4" fill="#999" stroke="none"/><circle cx="55" cy="5" r="4"/><path d="M53 5L54.500 6.500L57 3.500" stroke-width=".8"/></svg>

</div></body></html>
